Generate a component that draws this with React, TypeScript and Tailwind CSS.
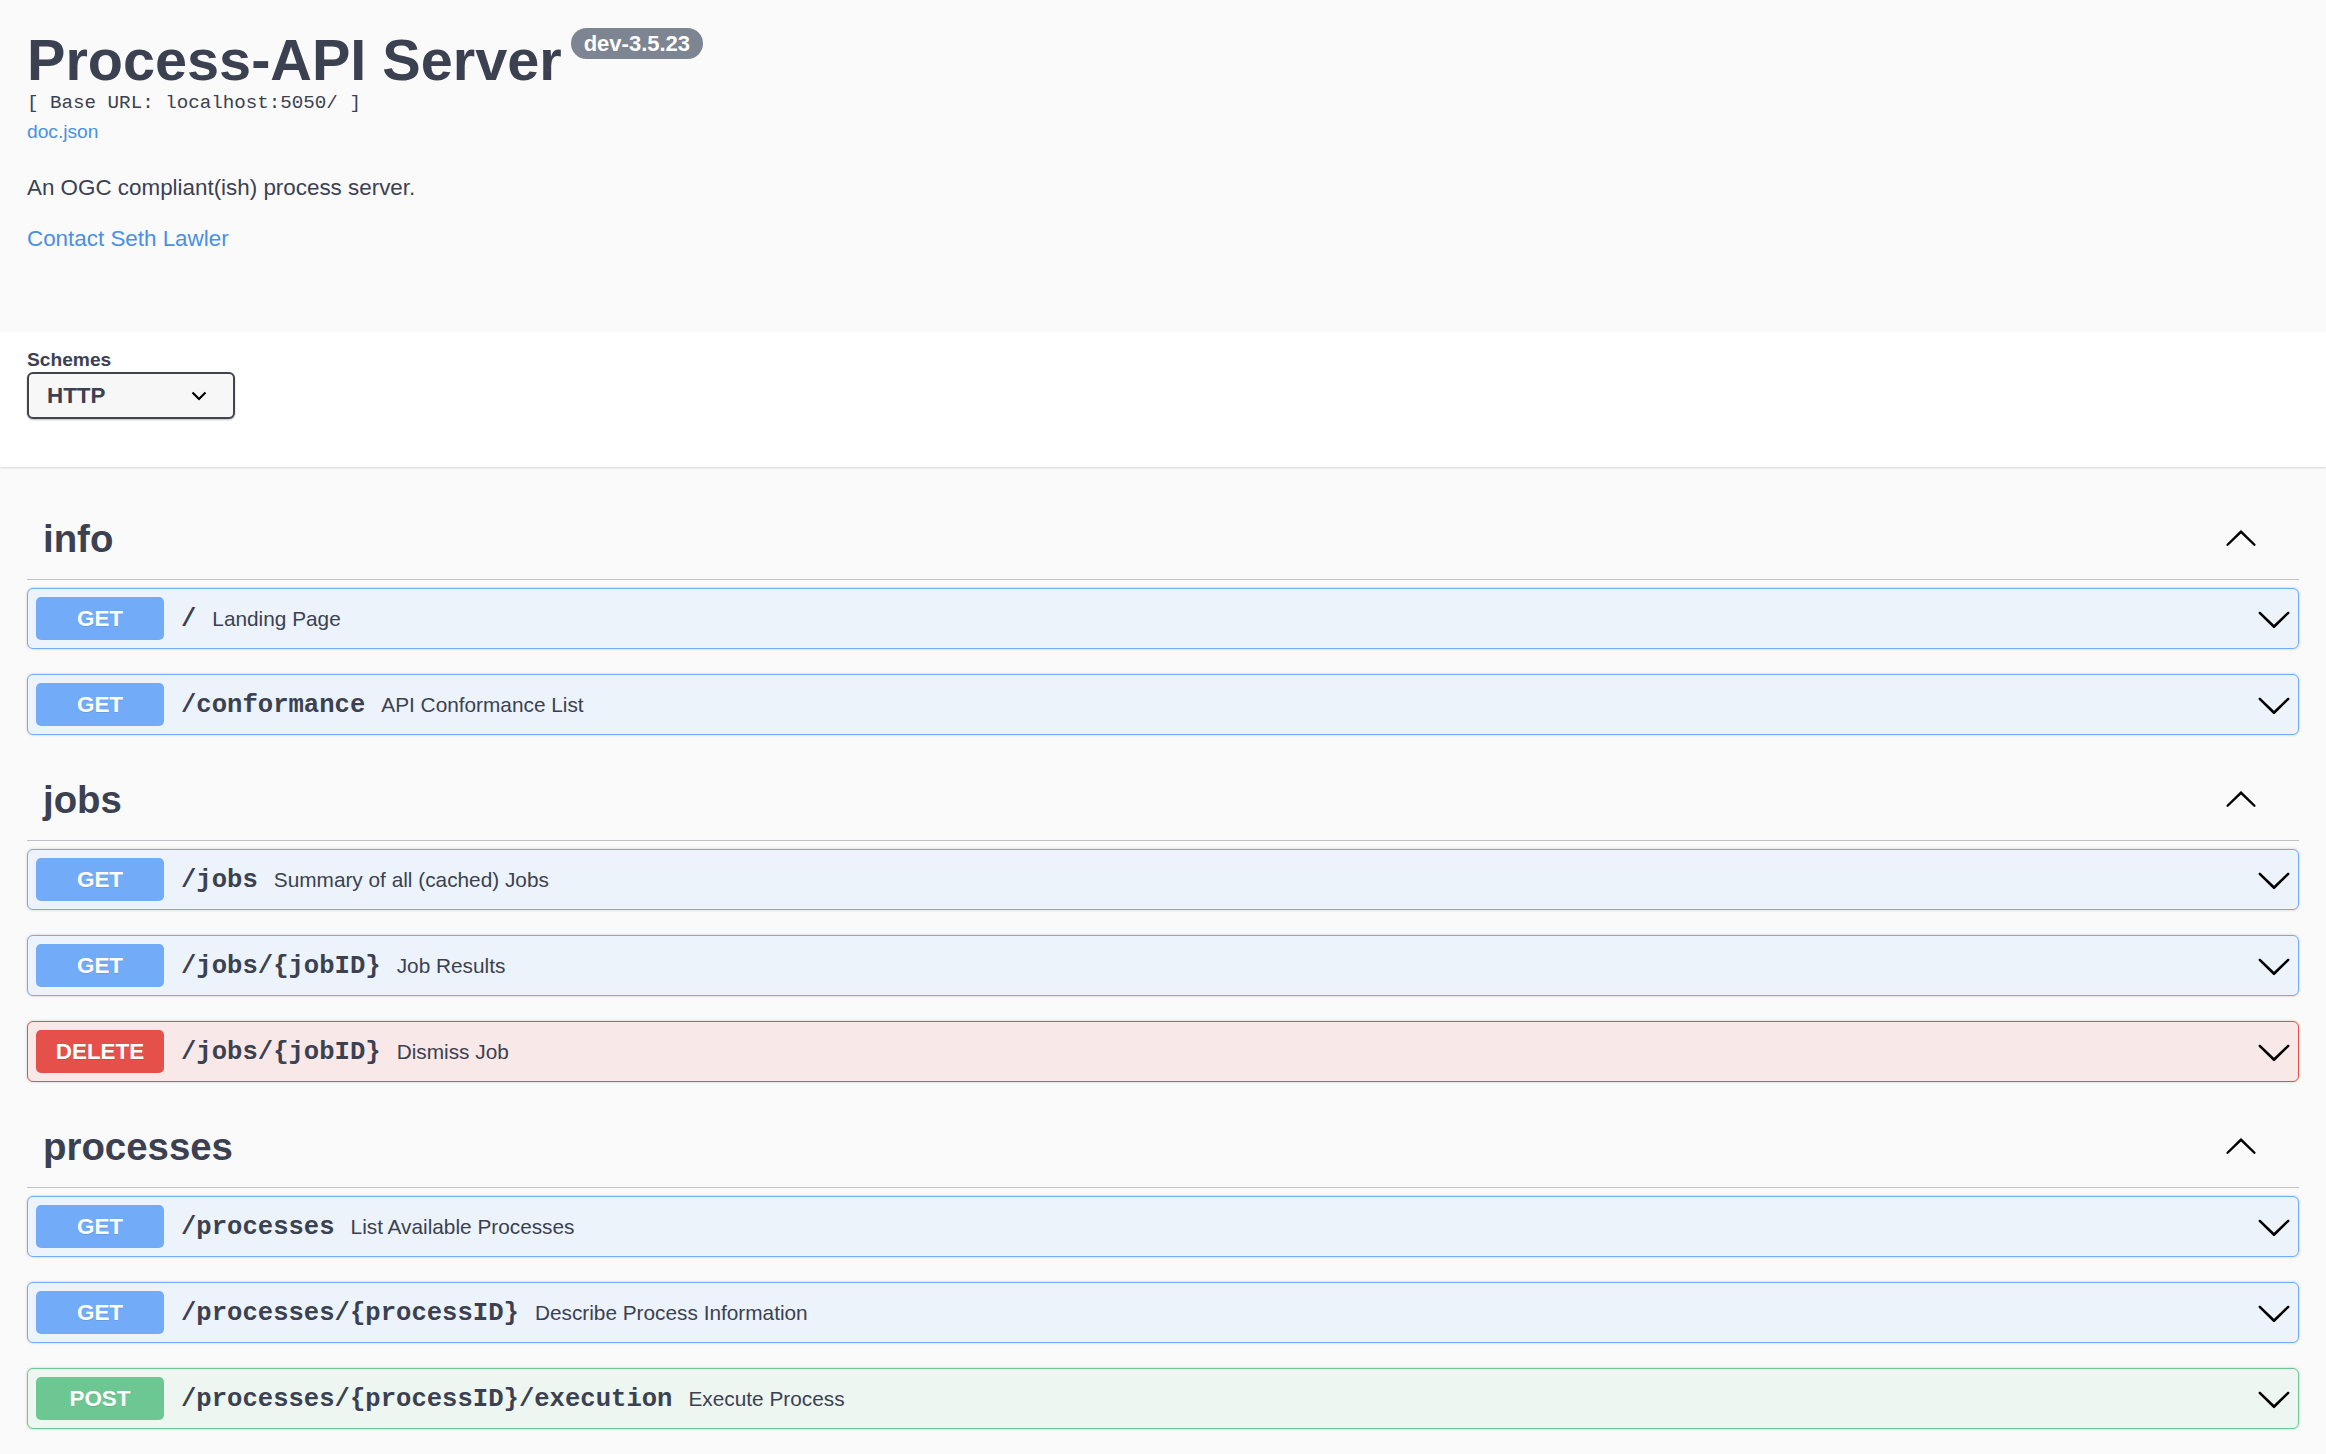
import React from "react";

type Method = "GET" | "DELETE" | "POST";

const methodStyles: Record<Method, { row: string; badge: string }> = {
  GET: {
    row: "bg-[#ecf3fb] border-[#72abf7]",
    badge: "bg-[#72abf7]",
  },
  DELETE: {
    row: "bg-[#f9e8e8] border-[#e5504a]",
    badge: "bg-[#e5504a]",
  },
  POST: {
    row: "bg-[#edf6f1] border-[#6cc792]",
    badge: "bg-[#6cc792]",
  },
};

const ARROW =
  "M17.418 6.109c.272-.268.709-.268.979 0s.271.701 0 .969l-7.908 7.83c-.27.268-.707.268-.979 0l-7.908-7.830c-.27-.268-.27-.701 0-.969.271-.268.709-.268.979 0L10 13.25l7.418-7.141z";

function ChevronDown({ size }: { size: number }) {
  return (
    <svg width={size} height={size} viewBox="0 0 20 20" aria-hidden="true">
      <path d={ARROW} fill="#000" />
    </svg>
  );
}

function ChevronUp({ size }: { size: number }) {
  return (
    <svg width={size} height={size} viewBox="0 0 20 20" aria-hidden="true" className="rotate-180">
      <path d={ARROW} fill="#000" />
    </svg>
  );
}

function Op({ method, path, summary }: { method: Method; path: string; summary: string }) {
  const s = methodStyles[method];
  return (
    <div
      className={`mb-[25px] flex h-[61px] items-center rounded-[6px] border pl-[8px] pr-[6px] shadow-[0_0_3px_rgba(0,0,0,0.19)] ${s.row}`}
    >
      <div
        className={`flex h-[43px] w-[128px] shrink-0 items-center justify-center rounded-[5px] text-[22.4px] font-bold text-white [text-shadow:0_1px_0_rgba(0,0,0,0.1)] ${s.badge}`}
      >
        {method}
      </div>
      <div className="flex flex-1 items-baseline pt-[1px]">
        <span className="pl-[17px] pr-[16px] font-['Liberation_Mono',monospace] text-[25.6px] font-bold leading-[30px] text-[#3b4151]">
          {path}
        </span>
        <span className="text-[20.8px] leading-[30px] text-[#3b4151]">{summary}</span>
      </div>
      <ChevronDown size={36} />
    </div>
  );
}

function Tag({ name }: { name: string }) {
  return (
    <div className="mb-[8px] flex h-[81px] items-center border-b border-[rgba(59,65,81,0.3)] pl-[16px] pr-[41px]">
      <h3 className="flex-1 text-[38.4px] font-bold text-[#3b4151]">{name}</h3>
      <ChevronUp size={34} />
    </div>
  );
}

export default function App() {
  return (
    <div className="min-h-screen bg-[#fafafa] font-['Liberation_Sans',Arial,sans-serif] text-[#3b4151]">
      {/* Info */}
      <div className="h-[332px] px-[27px] pt-[27px]">
        <div className="flex items-start">
          <h1 className="text-[57.6px] font-bold leading-[66px] text-[#3b4151]">Process-API Server</h1>
          <span className="ml-[9px] mt-[1px] flex h-[31px] items-center rounded-full bg-[#7d8492] px-[13px] text-[22px] font-bold text-white">
            dev-3.5.23
          </span>
        </div>
        <div className="font-['Liberation_Mono',monospace] text-[19.2px] leading-[20px] text-[#3b4151]">
          [ Base URL: localhost:5050/ ]
        </div>
        <div className="mt-[7px] text-[19.2px] leading-[24px] text-[#4990e2]">doc.json</div>
        <p className="mt-[29px] text-[22.4px] leading-[30px] text-[#3b4151]">
          An OGC compliant(ish) process server.
        </p>
        <div className="mt-[21px] text-[22.4px] leading-[30px] text-[#4990e2]">Contact Seth Lawler</div>
      </div>

      {/* Schemes */}
      <div className="relative h-[135px] bg-white px-[27px] pt-[18px] shadow-[0_1px_2px_0_rgba(0,0,0,0.15)]">
        <div className="text-[19.2px] font-bold leading-[20px] text-[#3b4151]">Schemes</div>
        <div className="mt-[2px] flex h-[47px] w-[208px] items-center justify-between rounded-[6px] border-2 border-[#41444e] bg-[#f7f7f7] pl-[18px] pr-[26px] shadow-[0_1px_2px_0_rgba(0,0,0,0.25)]">
          <span className="text-[22.4px] font-bold text-[#3b4151]">HTTP</span>
          <svg width="16" height="10" viewBox="0 0 16 10" aria-hidden="true">
            <polyline points="1.5,1.5 8,8 14.5,1.5" fill="none" stroke="#000" strokeWidth="2.2" />
          </svg>
        </div>
      </div>

      {/* Operations */}
      <div className="px-[27px] pt-[32px]">
        <Tag name="info" />
        <Op method="GET" path="/" summary="Landing Page" />
        <Op method="GET" path="/conformance" summary="API Conformance List" />

        <Tag name="jobs" />
        <Op method="GET" path="/jobs" summary="Summary of all (cached) Jobs" />
        <Op method="GET" path="/jobs/{jobID}" summary="Job Results" />
        <Op method="DELETE" path="/jobs/{jobID}" summary="Dismiss Job" />

        <Tag name="processes" />
        <Op method="GET" path="/processes" summary="List Available Processes" />
        <Op method="GET" path="/processes/{processID}" summary="Describe Process Information" />
        <Op method="POST" path="/processes/{processID}/execution" summary="Execute Process" />
      </div>
    </div>
  );
}
